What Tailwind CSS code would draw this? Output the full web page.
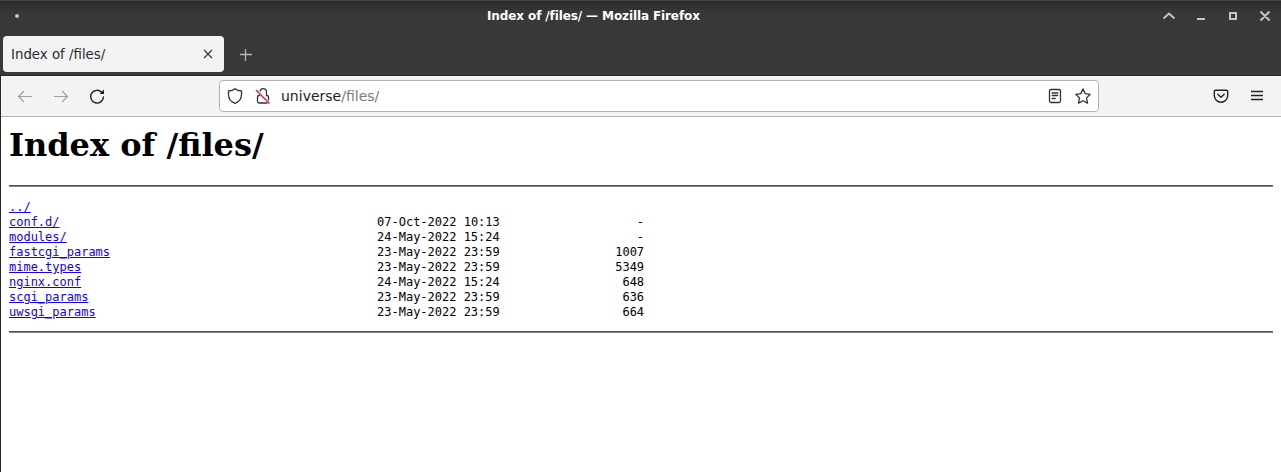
<!DOCTYPE html>
<html lang="en">
<head>
<meta charset="utf-8">
<title>Index of /files/</title>
<script src="https://cdn.jsdelivr.net/npm/@tailwindcss/browser@4"></script>
</head>
<body class="w-[1281px] h-[472px] overflow-hidden flex flex-col bg-[#383838] font-['DejaVu_Sans',sans-serif]">
<header class="h-8 shrink-0 border-t border-[#454545] bg-linear-to-b from-[#2c2c2c] to-[#383838] to-40% grid grid-cols-[486px_1fr_133px] items-center">
  <div class="pl-[15px] pb-px"><div class="size-1 rounded-full bg-[#c4c4c4]"></div></div>
  <div class="text-[12px] leading-4 font-bold text-white whitespace-nowrap pl-px pb-[2px] tracking-[-0.11px]">Index of /files/ — Mozilla Firefox</div>
  <svg class="w-[133px] h-[31px]" viewBox="0 0 133 31" fill="none" stroke="#c4c4c4" stroke-width="2">
    <path d="M15.500 17.500l5.500-5 5.500 5M49 18h8M82 12h6v6h-6zM112.500 10.500l9 9M121.500 10.500l-9 9"/>
  </svg>
</header>
<nav class="h-[43px] shrink-0 flex items-start pl-[3px] pt-1">
  <div class="w-[221px] h-9 rounded bg-[#f3f3f3] flex items-center justify-between pl-2 pr-[11px] text-[13.33px] text-[#2a2a2e]">
    <span class="pt-[2px]">Index of /files/</span>
    <svg class="size-[10px]" viewBox="0 0 10 10" stroke="#333" stroke-width="1.100"><path d="M1 1l8 8M9 1l-8 8"/></svg>
  </div>
  <svg class="size-3 ml-4 mt-[13px]" viewBox="0 0 12 12" stroke="#b5b5b5" stroke-width="1.300"><path d="M5.500 0v12M0 5.500h12"/></svg>
</nav>
<div class="flex-1 border-l border-t border-[#2a272b] bg-white flex flex-col">
  <div class="h-[41px] shrink-0 bg-[#f3f3f3] border-b border-[#b1b1b1] flex items-center pl-4">
    <div class="w-[202px] flex items-center gap-5">
      <svg class="size-4" viewBox="0 0 16 16" fill="none" stroke="#a0a0a0" stroke-width="1.200" stroke-linecap="round" stroke-linejoin="round"><path d="M14.500 8.500h-13M6.500 3.500l-5 5 5 5"/></svg>
      <svg class="size-4" viewBox="0 0 16 16" fill="none" stroke="#a0a0a0" stroke-width="1.200" stroke-linecap="round" stroke-linejoin="round"><path d="M1.500 8.500h13M9.500 3.500l5 5-5 5"/></svg>
      <svg class="size-4" viewBox="0 0 16 16" fill="none" stroke="#222" stroke-width="1.400" stroke-linecap="round"><path d="M14.500 9a6.400 6.400 0 1 1-2-5"/><path d="M15 1.500V6H10.500z" fill="#222" stroke="none"/></svg>
    </div>
    <div class="w-[880px] h-8 rounded border border-[#b3b3b3] bg-white flex items-center px-[7px]">
      <svg class="size-4" viewBox="0 0 16 16" fill="none" stroke="#333" stroke-width="1.300" stroke-linejoin="round"><path d="M8 .7C6.500 2 4 2.800 1.500 3v3.500C1.500 11 4.500 14 8 15.400 11.500 14 14.500 11 14.500 6.500V3C12 2.800 9.500 2 8 .7z"/></svg>
      <svg class="size-4 ml-3" viewBox="0 0 16 16" fill="none" stroke="#333" stroke-width="1.300" stroke-linejoin="round"><path d="M5 3.300C5.400 1.600 6.600.7 8 .7c2 0 3.500 1.500 3.500 3.500v3.300h.6q1.400 0 1.400 1.400v3.600M5 7.500H4q-1.500 0-1.500 1.500v4.500q0 1.500 1.500 1.500h8.500"/><path d="M1 2l13.500 13.500" stroke="#ff1455" stroke-width="1.500"/></svg>
      <div class="ml-[10px] text-[14px] leading-5 text-[#222]">universe<span class="text-[#7b7b7b]">/files/</span></div>
      <svg class="size-4 ml-auto" viewBox="0 0 16 16" fill="none" stroke="#333" stroke-width="1.300" stroke-linecap="round"><rect x="2.500" y="1.500" width="11" height="13" rx="1.500"/><path d="M5.200 5h5.600M5.200 7.500h5.600M5.200 10.500h3"/></svg>
      <svg class="size-4 ml-3" viewBox="0 0 16 16" fill="none" stroke="#333" stroke-width="1.300" stroke-linejoin="round"><path d="M8 .9l2.200 4.700 5 .7-3.700 3.600 1 5.200L8 12.700l-4.500 2.400 1-5.200L.8 6.300l5-.7z"/></svg>
    </div>
    <svg class="size-4 ml-[114px]" viewBox="0 0 16 16" fill="none" stroke="#222" stroke-width="1.400" stroke-linecap="round" stroke-linejoin="round"><path d="M2.500 2.200h11q1.200 0 1.200 1.200V7.500a6.700 6.700 0 0 1-13.400 0V3.400q0-1.200 1.200-1.200zM4.800 6.200L8 9.200l3.200-3"/></svg>
    <svg class="size-4 ml-5" viewBox="0 0 16 16" fill="none" stroke="#222" stroke-width="1.300"><path d="M2 3.500h12M2 7.500h12M2 11.500h12"/></svg>
  </div>
  <main class="px-2 text-black">
    <h1 class="mt-[9px] text-[32px] leading-[38px] font-bold font-['DejaVu_Serif',serif]">Index of /files/</h1>
    <hr class="mt-[21px] h-0.5 border-0 border-t border-[#555] bg-[#858585]">
    <pre class="mt-[13px] text-[12px] leading-[15px] tracking-[-0.008px] font-['DejaVu_Sans_Mono',monospace] [&_a]:text-[#1400ec] [&_a]:underline"><a href="#">../</a>
<a href="#">conf.d/</a>                                            07-Oct-2022 10:13                   -
<a href="#">modules/</a>                                           24-May-2022 15:24                   -
<a href="#">fastcgi_params</a>                                     23-May-2022 23:59                1007
<a href="#">mime.types</a>                                         23-May-2022 23:59                5349
<a href="#">nginx.conf</a>                                         24-May-2022 15:24                 648
<a href="#">scgi_params</a>                                        23-May-2022 23:59                 636
<a href="#">uwsgi_params</a>                                       23-May-2022 23:59                 664</pre>
    <hr class="mt-[11px] h-0.5 border-0 border-t border-[#555] bg-[#858585]">
  </main>
</div>
</body>
</html>
